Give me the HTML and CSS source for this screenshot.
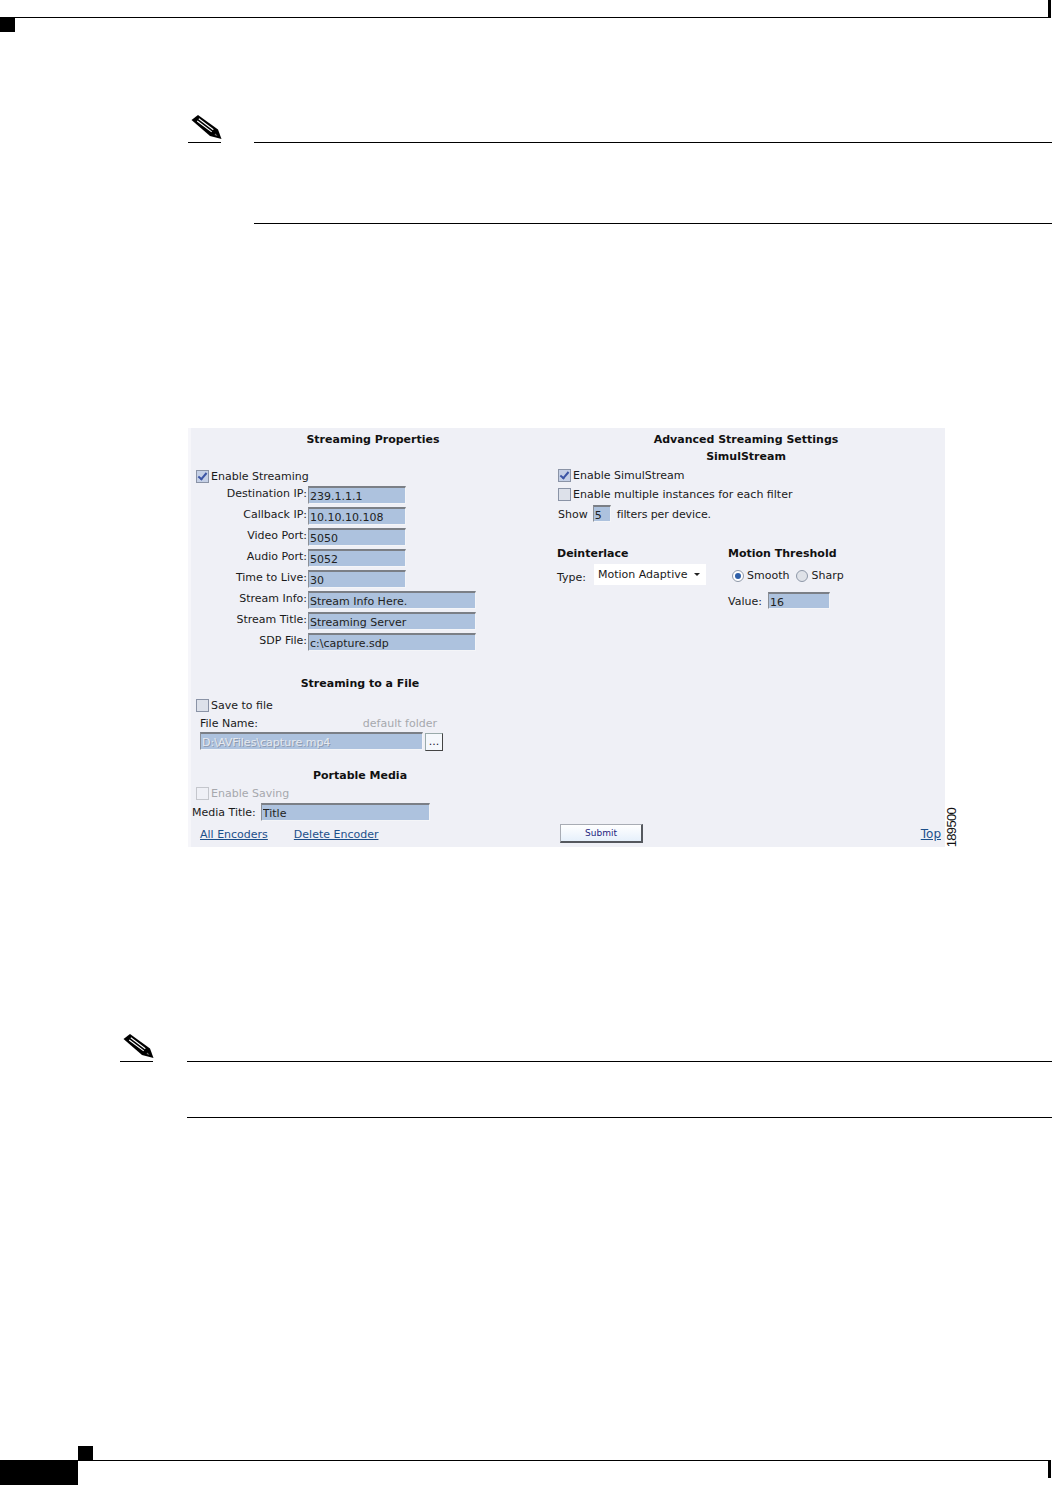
FILE: index.html
```html
<!DOCTYPE html>
<html>
<head>
<meta charset="UTF-8">
<title>Streaming Properties</title>
<link rel="stylesheet" href="styles.css">
</head>
<body>
<div class="page">
    <div class="pageHead">
        <div class="headMark"></div>
        <div class="headRule"></div>
    </div>

    <div class="note note1">
        <div class="noteIcon">
            <svg width="32" height="25" viewBox="0 0 32 25"><polygon points="1.5,5 8,0 28,14.5 31.5,24 20,21" fill="#000"/><path d="M8.8 3.8L23.3 14.7M7.2 6L21.7 16.9" stroke="#fff" stroke-width="1.1"/><polygon points="25.5,18.5 27.5,21 24.5,20" fill="#777"/></svg>
        </div>
        <div class="noteBody noteBody1"></div>
    </div>

    <div class="figure">
        <div class="panel">
            <div class="panelCols">
                <div class="colLeft">
                    <h2 class="head headMain">Streaming Properties</h2>
                    <label class="checkRow enableRow"><input type="checkbox" checked>Enable Streaming</label>
                    <div class="propGrid">
                        <span>Destination IP:</span><input class="field short" value="239.1.1.1">
                        <span>Callback IP:</span><input class="field short" value="10.10.10.108">
                        <span>Video Port:</span><input class="field short" value="5050">
                        <span>Audio Port:</span><input class="field short" value="5052">
                        <span>Time to Live:</span><input class="field short" value="30">
                        <span>Stream Info:</span><input class="field long" value="Stream Info Here.">
                        <span>Stream Title:</span><input class="field long" value="Streaming Server">
                        <span>SDP File:</span><input class="field long" value="c:\capture.sdp">
                    </div>

                    <h2 class="head headSub fileHead">Streaming to a File</h2>
                    <label class="checkRow saveRow"><input type="checkbox">Save to file</label>
                    <div class="fileLabels"><span>File Name:</span><span class="muted">default folder</span></div>
                    <div class="fileRow">
                        <input class="field fileField" value="D:\AVFiles\capture.mp4" disabled>
                        <button class="browseBtn">...</button>
                    </div>

                    <h2 class="head headSub mediaHead">Portable Media</h2>
                    <label class="checkRow savingRow muted"><input type="checkbox" disabled>Enable Saving</label>
                    <div class="mediaRow"><span>Media Title:</span><input class="field mediaField" value="Title"></div>
                </div>

                <div class="colRight">
                    <h2 class="head">Advanced Streaming Settings</h2>
                    <h2 class="head simulHead">SimulStream</h2>
                    <div class="simulBlock">
                        <label class="checkRow simulRow"><input type="checkbox" checked>Enable SimulStream</label>
                        <label class="checkRow multiRow"><input type="checkbox">Enable multiple instances for each filter</label>
                        <div class="showRow"><span>Show</span><input class="field showField" value="5"><span class="tight">filters per device.</span></div>
                    </div>
                    <div class="lowerCols">
                        <div class="deintCol">
                            <h3 class="head subLeft">Deinterlace</h3>
                            <div class="typeRow"><span class="typeLabel">Type:</span><div class="select">Motion Adaptive<i class="caret"></i></div></div>
                        </div>
                        <div class="motionCol">
                            <h3 class="head subLeft">Motion Threshold</h3>
                            <div class="radioRow">
                                <input type="radio" name="motion" checked><span>Smooth</span>
                                <input class="radioNext" type="radio" name="motion"><span>Sharp</span>
                            </div>
                            <div class="valueRow"><span>Value:</span><input class="field valueField" value="16"></div>
                        </div>
                    </div>
                </div>
            </div>

            <div class="panelFoot">
                <div class="footLinks"><a href="#">All Encoders</a><a href="#">Delete Encoder</a></div>
                <button class="submitBtn">Submit</button>
                <a class="topLink" href="#">Top</a>
            </div>
        </div>
        <div class="figNum">189500</div>
    </div>

    <div class="note note2">
        <div class="noteIcon">
            <svg width="32" height="25" viewBox="0 0 32 25"><polygon points="1.5,5 8,0 28,14.5 31.5,24 20,21" fill="#000"/><path d="M8.8 3.8L23.3 14.7M7.2 6L21.7 16.9" stroke="#fff" stroke-width="1.1"/><polygon points="25.5,18.5 27.5,21 24.5,20" fill="#777"/></svg>
        </div>
        <div class="noteBody noteBody2"></div>
    </div>

    <div class="pageFoot">
        <div class="footTab"></div>
        <div class="footSide">
            <div class="footMark"></div>
            <div class="footRule"></div>
        </div>
    </div>
</div>
</body>
</html>
```

FILE: styles.css
```css
body, h2, h3 {margin: 0; padding: 0; font-weight: normal; font-size: 100%;}

body {background: #fff;}

.page {
    width: 1052px;
    height: 1485px;
    display: flex;
    flex-direction: column;
    overflow: hidden;
    font: 11px/16px "DejaVu Sans", sans-serif;
    color: #1a1a1a;
}

/* page furniture */
.pageHead {height: 32px; display: flex;}
.headMark {width: 15px; height: 15px; margin-top: 17px; background: #000;}
.headRule {
    flex: 1;
    height: 17px;
    margin-right: 1px;
    border-bottom: 1px solid #000;
    border-right: 3px solid #000;
}

.pageFoot {margin-top: auto; display: flex; align-items: flex-end;}
.footTab {width: 78px; height: 25px; background: #000;}
.footSide {flex: 1;}
.footMark {width: 15px; height: 14px; background: #000;}
.footRule {
    height: 17px;
    margin: 0 1px 7px 0;
    border-top: 1px solid #000;
    border-right: 3px solid #000;
}

/* notes */
.note {display: flex; align-items: flex-start;}
.note1 {margin: 82px 0 0 188px;}
.note2 {margin: 186px 0 0 120px;}
.noteIcon {
    width: 33px;
    height: 29px;
    padding: 1px 0 0 2px;
    border-bottom: 1px solid #000;
    box-sizing: border-box;
}
.note1 .noteIcon {margin-right: 33px;}
.note2 .noteIcon {margin-right: 34px;}
.noteBody {flex: 1; margin-top: 28px; border-top: 1px solid #000; border-bottom: 1px solid #000;}
.noteBody1 {height: 80px;}
.noteBody2 {height: 55px;}

/* figure */
.figure {display: flex; align-items: flex-end; margin: 204px 0 0 188px;}
.figNum {
    writing-mode: vertical-rl;
    transform: rotate(180deg);
    font: 13px/14px "Liberation Sans", sans-serif;
    letter-spacing: -0.7px;
    color: #111;
}

.panel {
    width: 757px;
    height: 419px;
    display: flex;
    flex-direction: column;
    background: #eff0f6;
    border-left: 3px solid #f6f6fa;
    box-sizing: border-box;
}
.panelCols {display: flex; flex: 1;}
.colLeft {width: 356px; padding-top: 4px;}
.colRight {width: 398px; padding-top: 4px;}

.head {font-weight: bold; color: #111; text-align: center;}
.headMain {padding-left: 8px;}
.headSub {padding-right: 18px;}
.fileHead {margin-top: 25px;}
.mediaHead {margin-top: 17px;}
.simulHead {margin-top: 1px;}
.subLeft {text-align: left;}

.checkRow {display: flex; align-items: center; height: 16px;}
.enableRow {margin: 21px 0 0 5px;}
.saveRow {margin: 6px 0 0 5px;}
.savingRow {margin: 2px 0 0 5px;}
.simulRow {margin-top: 3px;}
.multiRow {margin-top: 3px;}

input[type=checkbox] {
    appearance: none;
    position: relative;
    width: 13px;
    height: 13px;
    margin: 0 2px 2px 0;
    border: 1px solid #8a93a6;
    background: #dde1ea;
    box-sizing: border-box;
}
input[type=checkbox]:checked {background: #c5d0e6;}
input[type=checkbox]:checked::after {
    content: "";
    position: absolute;
    left: 3px;
    top: 0;
    width: 3px;
    height: 7px;
    border-right: 2px solid #3c55a5;
    border-bottom: 2px solid #3c55a5;
    transform: rotate(40deg);
}
input[type=checkbox]:disabled {background: #eff0f6; border-color: #c4c6cc;}

input[type=radio] {
    appearance: none;
    position: relative;
    width: 12px;
    height: 12px;
    margin: 0 3px 0 0;
    border: 1px solid #8e98a8;
    border-radius: 50%;
    background: #dfe2e8;
    box-sizing: border-box;
}
input[type=radio]:checked {background: #fff;}
input[type=radio]:checked::after {
    content: "";
    position: absolute;
    left: 2px;
    top: 2px;
    width: 6px;
    height: 6px;
    border-radius: 50%;
    background: #2f5fa8;
}

.field {
    height: 18px;
    padding: 2px 0 0 1px;
    background: #adc2de;
    border: 0;
    border-top: 2px solid #7b7f86;
    border-left: 1px solid #8b8f96;
    border-bottom: 1px solid #f4f5f8;
    border-right: 1px solid #f4f5f8;
    box-sizing: border-box;
    font: 11px "DejaVu Sans", sans-serif;
    color: #222;
    outline: none;
}
.short {width: 98px;}
.long {width: 168px;}

.propGrid {
    display: grid;
    grid-template-columns: 116px auto;
    grid-auto-rows: 18px;
    row-gap: 3px;
    margin-top: 1px;
    justify-content: start;
    text-align: right;
}
.propGrid input {margin-left: 1px;}

.fileLabels {display: flex; justify-content: space-between; width: 237px; margin: 2px 0 0 9px;}
.muted {color: #a6a8ad;}
.fileRow {display: flex; align-items: flex-start; margin-left: 9px;}
.fileField {width: 223px; color: #e6e9ef; text-shadow: 1px 1px 0 #8e9bb0;}
.browseBtn {
    width: 18px;
    height: 18px;
    margin: 1px 0 0 2px;
    padding: 0;
    background: #f5f8fc;
    border: 1px solid #9aa;
    border-right-color: #444;
    border-bottom-color: #444;
    font: 11px/10px "DejaVu Sans", sans-serif;
    color: #223;
}
.mediaRow {display: flex; gap: 5px; margin: 1px 0 0 1px; line-height: 20px;}
.mediaField {width: 169px;}

.simulBlock {padding-left: 11px;}
.showRow {display: flex; margin-top: 2px; line-height: 20px;}
.showField {width: 18px; height: 17px; margin: 0 6px 0 5px;}
.tight {letter-spacing: -0.1px;}

.lowerCols {display: flex; margin-top: 21px;}
.deintCol {width: 171px; margin-left: 10px;}
.typeRow {display: flex; margin-top: 2px; line-height: 28px;}
.typeLabel {width: 37px;}
.select {
    width: 112px;
    height: 21px;
    display: flex;
    align-items: center;
    justify-content: space-between;
    padding: 0 6px 0 4px;
    box-sizing: border-box;
    background: #fff;
    line-height: 21px;
}
.caret {width: 0; height: 0; border: 3px solid transparent; border-top-color: #222; margin-top: 3px;}
.radioRow {display: flex; align-items: center; height: 16px; margin: 6px 0 0 4px;}
.radioRow .radioNext {margin-left: 7px;}
.valueRow {display: flex; margin-top: 8px; line-height: 20px;}
.valueRow span {width: 40px;}
.valueField {width: 62px; height: 17px;}

/* bottom of the panel */
.panelFoot {display: flex; align-items: flex-start; height: 23px; padding-right: 4px; line-height: 21px;}
.footLinks {width: 360px; padding-left: 9px; box-sizing: border-box; display: flex; gap: 26px;}
.panelFoot a {color: #1c4f8a;}
.submitBtn {
    width: 83px;
    height: 19px;
    margin-left: 9px;
    padding: 0;
    background: linear-gradient(#fff, #e6f0fb);
    border: 1px solid #a8acb4;
    border-right: 2px solid #55585e;
    border-bottom: 2px solid #55585e;
    font: 9px "DejaVu Sans", sans-serif;
    color: #1f1f80;
}
.topLink {margin-left: auto; font-size: 12px;}
```
